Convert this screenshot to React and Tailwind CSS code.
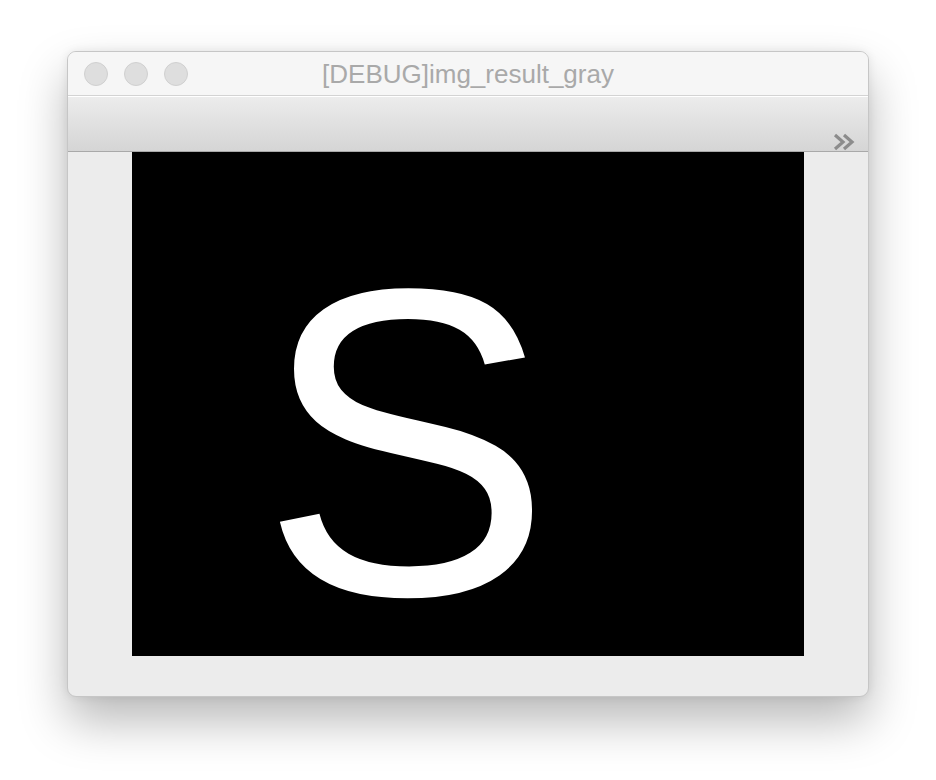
import React from 'react';

const TrafficLight = () => (
    <span className="w-[24px] h-[24px] rounded-full bg-[#dedede] border border-[#d0d0d0]" />
);

const App = () => {
    return (
        <div className="w-[936px] h-[780px] bg-white pt-[51px] pl-[67px]" style={{ fontFamily: '"Liberation Sans", Arial, sans-serif' }}>
            <div className="w-[802px] h-[646px] rounded-[9px] border border-[#c6c6c6] bg-[#ececec] overflow-hidden shadow-[0_24px_48px_rgba(0,0,0,0.28),0_0_10px_rgba(0,0,0,0.08)] flex flex-col">
                {/* title bar */}
                <div className="relative h-[44px] bg-[#f6f6f6] border-b border-[#d3d3d3] flex items-center px-[16px] gap-[16px]">
                    <TrafficLight />
                    <TrafficLight />
                    <TrafficLight />
                    <span className="absolute inset-x-0 text-center text-[26px] text-[#a9a9a9] leading-none">
                        [DEBUG]img_result_gray
                    </span>
                </div>
                {/* toolbar */}
                <div className="h-[56px] border-t border-white border-b border-b-[#a9a9a9] bg-gradient-to-b from-[#ececec] to-[#d5d5d5] flex items-end justify-end pr-[10px]">
                    <svg width="26" height="18" viewBox="0 0 26 18">
                        <path d="M3 2 L11 9 L3 16" fill="none" stroke="#8c8c8c" strokeWidth="3.2" />
                        <path d="M12 2 L20 9 L12 16" fill="none" stroke="#8c8c8c" strokeWidth="3.2" />
                    </svg>
                </div>
                {/* content */}
                <div className="flex-1 pl-[64px] pr-[64px] pb-[39px]">
                    <div className="relative w-[672px] h-[504px] bg-black">
                        <span className="absolute left-[128px] top-[126px] text-white text-[438px] leading-[0.75] select-none">
                            S
                        </span>
                    </div>
                </div>
            </div>
        </div>
    );
};

export default App;
